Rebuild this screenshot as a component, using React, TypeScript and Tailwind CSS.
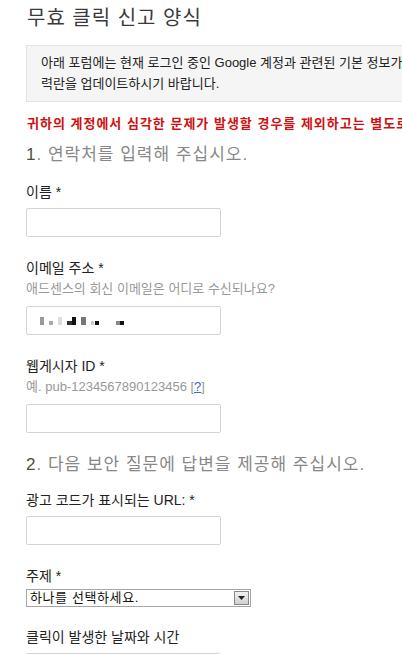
import React from "react";

const font = "font-['Liberation_Sans','Noto_Sans_CJK_KR',sans-serif]";

const Label = ({ children, className = "" }: { children: React.ReactNode; className?: string }) => (
  <div className={`text-[14px] leading-[20px] text-[#222] ${className}`}>{children}</div>
);

const Hint = ({ children }: { children: React.ReactNode }) => (
  <div className="text-[13px] leading-[22px] text-[#999]">{children}</div>
);

const TextBox = ({ className = "", children }: { className?: string; children?: React.ReactNode }) => (
  <div className={`w-[195px] h-[29px] border border-[#d4d4d4] rounded-[2px] bg-white flex items-center px-[13px] gap-[4px] ${className}`}>{children}</div>
);

// blurred email value in the reference
const Pixels = () => (
  <div className="flex items-center gap-[5px]">
    <span className="w-[4px] h-[8px] bg-[#999]" />
    <span className="w-[4px] h-[4px] mt-[4px] bg-[#aaa]" />
    <span className="w-[4px] h-[8px] bg-[#ddd]" />
    <span className="flex items-end">
      <span className="w-[5px] h-[4px] bg-[#333]" />
      <span className="w-[4px] h-[8px] bg-[#111]" />
    </span>
    <span className="w-[5px] h-[8px] bg-[#777]" />
    <span className="flex items-end gap-[1px] mt-[4px]">
      <span className="w-[3px] h-[4px] bg-[#ccc]" />
      <span className="w-[4px] h-[4px] bg-[#111]" />
    </span>
    <span className="ml-[12px] flex mt-[4px]">
      <span className="w-[4px] h-[4px] bg-[#888]" />
      <span className="w-[4px] h-[4px] bg-[#111]" />
    </span>
  </div>
);

const Heading = ({ num, children, className = "" }: { num: string; children: React.ReactNode; className?: string }) => (
  <div className={`text-[17px] leading-[24px] tracking-[1px] text-[#888] ${className}`}>
    <span className="text-[#4a4f3c]">{num}</span>. {children}
  </div>
);

export default function App() {
  return (
    <div className={`w-[402px] h-[654px] overflow-hidden bg-white ${font}`}>
      <div className="w-[700px] pl-[26px]">
        <h1 className="text-[20px] leading-[36px] text-[#3a3a3a] pl-px tracking-[1px]">무효 클릭 신고 양식</h1>

        <div className="mt-[9px] h-[57px] w-[640px] bg-[#f5f5f5] border border-[#e2e2e2] pl-[14px] pt-[6px] text-[13px] leading-[21px] text-[#222]">
          <p>아래 포럼에는 현재 로그인 중인 Google 계정과 관련된 기본 정보가 자동으로 입력되어 있습니다.</p>
          <p>력란을 업데이트하시기 바랍니다.</p>
        </div>

        <p className="mt-[12px] pl-px text-[13px] leading-[20px] font-bold tracking-[1px] text-[#d01010] whitespace-nowrap">
          귀하의 계정에서 심각한 문제가 발생할 경우를 제외하고는 별도로 연락하지 않습니다.
        </p>

        <Heading num="1" className="mt-[9px]">연락처를 입력해 주십시오.</Heading>

        <Label className="mt-[15px]">이름 *</Label>
        <TextBox className="mt-[6px]" />

        <Label className="mt-[21px]">이메일 주소 *</Label>
        <Hint>애드센스의 회신 이메일은 어디로 수신되나요?</Hint>
        <TextBox className="mt-[6px]">
          <Pixels />
        </TextBox>

        <Label className="mt-[21px]">웹게시자 ID *</Label>
        <Hint>
          예. pub-1234567890123456 [<span className="underline text-[#3366cc]">?</span>]
        </Hint>
        <TextBox className="mt-[6px]" />

        <Heading num="2" className="mt-[20px]">다음 보안 질문에 답변을 제공해 주십시오.</Heading>

        <Label className="mt-[13px]">광고 코드가 표시되는 URL: *</Label>
        <TextBox className="mt-[6px]" />

        <Label className="mt-[21px]">주제 *</Label>
        <div className="mt-[3px] w-[225px] h-[18px] border border-[#a5a5a5] bg-white flex items-center justify-between">
          <span className="pl-[3px] text-[13px] leading-[16px] tracking-[0.6px] text-[#111]">하나를 선택하세요.</span>
          <span className="mr-px w-[15px] h-[14px] border border-[#888] bg-gradient-to-b from-[#f2f2f2] to-[#cfcfcf] flex items-center justify-center">
            <svg width="7" height="4" viewBox="0 0 7 4">
              <path d="M0 0h7L3.5 4z" fill="#222" />
            </svg>
          </span>
        </div>

        <Label className="mt-[20px]">클릭이 발생한 날짜와 시간</Label>
        <TextBox className="mt-[6px]" />
      </div>
    </div>
  );
}
